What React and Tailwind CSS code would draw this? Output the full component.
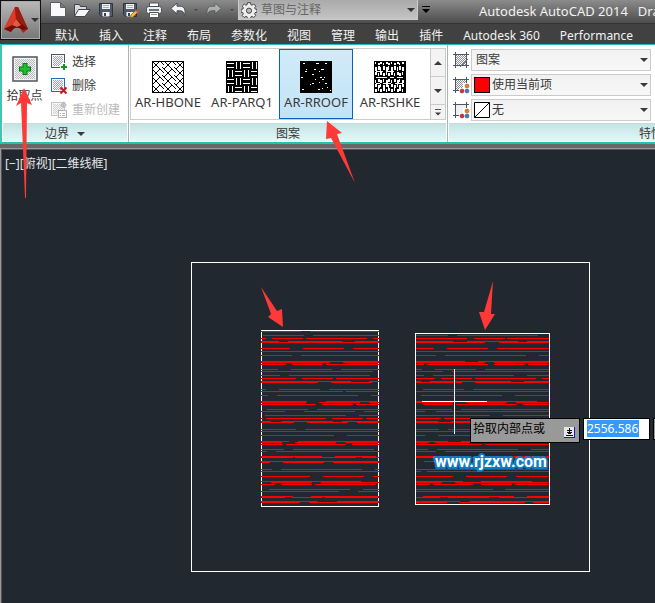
import React from "react";

const UI_FONT = "font-['Noto_Sans','Noto_Sans_CJK_SC',sans-serif]";

/* Each row: y, then start/end pairs, relative to the boundary's corner. */
const LEFT_HATCH = [
  [1, 0, 40, 49, 118], [5, 2, 43, 52, 118], [8, 0, 5, 11, 42, 45, 106, 112, 118],
  [11, 0, 18, 27, 81, 94, 118], [12, 0, 118], [18, 0, 29, 42, 83, 92, 118],
  [21, 0, 118], [25, 0, 31, 40, 118], [31, 0, 118], [32, 0, 69, 82, 118],
  [34, 0, 25, 31, 62, 65, 118], [39, 0, 17, 30, 71, 80, 118], [41, 0, 112],
  [45, 0, 19, 28, 109], [48, 0, 35, 41, 72, 75, 118], [51, 0, 90, 108, 118],
  [52, 0, 57, 70, 111], [59, 0, 5, 18, 59, 68, 118], [61, 0, 82, 85, 118],
  [65, 0, 7, 16, 97, 110, 118], [71, 0, 46, 65, 116], [72, 0, 45, 58, 99, 108, 118],
  [74, 0, 55, 61, 92, 95, 118], [79, 6, 47, 56, 118], [81, 0, 24, 43, 94, 103, 118],
  [85, 4, 85, 98, 118], [88, 0, 2, 5, 65, 71, 102, 105, 118], [91, 0, 10, 21, 72, 81, 118],
  [92, 0, 33, 46, 87, 96, 118], [99, 0, 35, 44, 118], [101, 0, 118],
  [105, 0, 73, 86, 118], [111, 0, 28, 37, 118], [112, 0, 21, 34, 75, 84, 118],
  [114, 0, 22, 25, 85, 91, 118], [119, 0, 23, 32, 113], [121, 0, 6, 15, 118],
  [126, 0, 61, 74, 115], [127, 0, 32, 34, 95, 101, 118], [131, 0, 118],
  [132, 0, 9, 22, 63, 72, 118], [139, 0, 11, 20, 101, 114, 118], [141, 0, 118],
  [146, 0, 49, 62, 103, 112, 118], [151, 0, 100], [152, 10, 51, 60, 118],
  [154, 0, 14, 20, 51, 54, 115], [159, 8, 89, 102, 118], [161, 0, 78, 97, 118],
  [166, 0, 32, 50, 118], [167, 0, 24, 31, 61, 64, 118], [171, 0, 56, 76, 118],
  [172, 0, 39, 48, 118],
];

const RIGHT_HATCH = [
  [2, 0, 33, 42, 123], [5, 0, 52, 59, 90, 92, 135], [8, 0, 38, 52, 103, 112, 135],
  [9, 0, 70, 84, 135], [15, 0, 19, 32, 73, 82, 135], [18, 0, 135],
  [22, 0, 21, 30, 111, 124, 135], [28, 0, 50, 63, 135], [29, 0, 70, 79, 135],
  [31, 0, 9, 12, 73, 79, 110, 113, 135], [36, 0, 7, 20, 61, 70, 135], [38, 0, 28, 37, 135],
  [42, 0, 9, 18, 99, 112, 135], [45, 0, 20, 26, 57, 60, 121, 127, 135],
  [48, 0, 6, 15, 96, 109, 135], [49, 0, 47, 60, 135], [56, 8, 49, 58, 135],
  [58, 0, 135], [62, 6, 87, 100, 135], [68, 0, 122], [69, 0, 38, 51, 92, 101, 135],
  [71, 8, 38, 41, 102, 108, 135], [76, 0, 37, 46, 135], [78, 0, 10, 21, 135],
  [82, 0, 75, 88, 135], [85, 0, 26, 29, 55], [88, 0, 23, 36, 55],
  [89, 0, 55], [96, 0, 24, 33, 135], [98, 0, 135], [102, 0, 10, 23, 135],
  [108, 0, 33, 46, 135], [109, 0, 14, 20, 82, 88, 135], [111, 0, 67, 70, 135],
  [116, 0, 13, 22, 103, 116, 135], [118, 0, 21, 30, 135], [123, 0, 50, 63, 135],
  [124, 0, 135], [128, 9, 50, 63, 135], [136, 0, 135], [138, 0, 6, 12, 135],
  [143, 0, 38, 51, 92, 101, 135], [148, 0, 48, 66, 117], [149, 0, 27, 40, 135],
  [151, 0, 15, 18, 58, 66, 97, 100, 135], [156, 0, 78, 90, 135], [158, 0, 135],
  [163, 8, 99, 112, 135], [164, 0, 25, 33, 74, 84, 135], [168, 0, 45, 54, 135],
  [169, 0, 32, 44, 110, 118, 135],
];

function Hatch({ x, y, rows }) {
  return (
    <g transform={`translate(${x} ${y})`} fill="#ff0000">
      {rows.map(([ry, ...xs], i) => {
        const parts = [];
        for (let k = 0; k < xs.length; k += 2) {
          parts.push(<rect key={k} x={xs[k]} y={ry} width={xs[k + 1] - xs[k]} height="1" />);
        }
        return <g key={i}>{parts}</g>;
      })}
    </g>
  );
}

function Caret({ size = "w-2", className = "" }) {
  return (
    <svg viewBox="0 0 8 4" className={`h-1 shrink-0 ${size} ${className}`} fill="currentColor" aria-hidden="true">
      <path d="M0 0h8L4 4z" />
    </svg>
  );
}

function Icon({ children, size = "size-4" }) {
  return (
    <svg viewBox="0 0 16 16" className={`${size} shrink-0 overflow-visible`} fill="none" aria-hidden="true">
      {children}
    </svg>
  );
}

const Disk = () => (
  <>
    <path d="M1.5 1.500h13v13h-11l-2-2z" fill="#50596a" stroke="#2c3442" />
    <path d="M4 2h8v5H4z" fill="#f2f2f2" />
    <path d="M5 3.500h6M5 5.500h6" stroke="#a8adb5" />
    <path d="M4.500 10h7v4.500h-7z" fill="#f4f4f4" />
    <path d="M6 11h2v3H6z" fill="#3b4352" />
  </>
);

const QUICK = [
  ["新建", <path key="a" d="M.5 1.500h10l5 5v9H.5zM10.500 1.500v5h5" transform="translate(0 -1)" fill="#fafafa" stroke="#596068" />],
  ["打开", <g key="a"><path d="M.5 14V2.500h5l1 2h6v3" fill="#d7d9dc" stroke="#3f464e" /><path d="M.5 14.500l4-7h11.500l-5 7z" fill="#f7f7f7" stroke="#3f464e" /></g>],
  ["保存", <Disk key="a" />],
  ["另存为", <g key="a"><Disk /><path d="M8 16l1-3 5-5 2 2-5 5z" fill="#f3b93c" stroke="#80551c" strokeWidth=".7" /><path d="M13 9l1.500-1.500L17 9.500 15.500 11z" fill="#d8574d" /></g>],
  ["打印", <g key="a"><path d="M3.500 5V1h9v4" fill="#fff" stroke="#555" /><rect x=".5" y="4.500" width="15" height="7" rx="2" fill="#eceef0" stroke="#4b5056" /><path d="M3 8h10" stroke="#454b54" strokeWidth="1.500" /><path d="M3.500 10.500h9v5h-9z" fill="#fff" stroke="#555" /><path d="M5 12.500h6" stroke="#999" /></g>],
  ["放弃", <path key="a" d="M.8 6.500L7 1v3.200h3c4.500 0 6 4 4.500 9.300C13.800 10 12.500 8.800 10 8.800H7V12z" fill="#f3f4f6" stroke="#474d55" />],
];

function HatchSwatch({ id, stroke = "#6b7178" }) {
  return (
    <defs>
      <pattern id={id} width="2" height="2" patternUnits="userSpaceOnUse">
        <path d="M0 0l2 2" stroke={stroke} strokeWidth=".8" />
      </pattern>
    </defs>
  );
}

function BoundaryIcon({ kind }) {
  const off = kind === "recreate";
  const id = `fill-${kind}`;
  return (
    <Icon>
      <HatchSwatch id={id} stroke={off ? "#c6c6c6" : "#8b9197"} />
      <rect x=".5" y=".5" width="13" height="13" fill="#f6f7f8" stroke={off ? "#c4c4c4" : kind === "remove" ? "#2868b8" : "#4e545c"} />
      <rect x="2" y="2" width="10" height="10" fill={`url(#${id})`} />
      {kind === "select" && <path d="M12.500 9v7M9 12.500h7" stroke="#fff" strokeWidth="4" />}
      {kind === "select" && <path d="M13 10v6M10 13h6" stroke="#0a9a1c" strokeWidth="2" />}
      {kind === "remove" && <path d="M9.500 9.500l6 6m0-6l-6 6" stroke="#cc1818" strokeWidth="2" />}
      {off && <g stroke="#b4b4b4"><rect x="7.500" y="8.500" width="8" height="7" fill="#fff" /><path d="M9 11.500h1m1 0h3M9 13.500h1m1 0h3" /><circle cx="12.500" cy="3" r="2" fill="#fff" /><path d="M12.500-.5v7M9 3h7M10 .5l5 5m0-5l-5 5" strokeWidth=".7" /></g>}
    </Icon>
  );
}

function PropIcon({ kind }) {
  const id = `prop-${kind}`;
  return (
    <Icon>
      <HatchSwatch id={id} />
      <rect x="3" y="3" width="10" height="10" fill={kind === "back" ? "#eef0f2" : "#fff"} />
      {kind !== "back" && <rect x="3" y="3" width="10" height="10" fill={`url(#${id})`} />}
      <path d="M0 2.500h16M2.500 0v16M0 13.500h16M13.500 0v16" stroke="#4b5563" />
      {kind === "type" && <path d="M7 15l8-8" stroke="#6b7280" />}
      {kind !== "type" && (
        <g>
          <path d="M6 11h4V6h7v11H6z" fill="#fff" />
          <circle cx="14" cy="9" r="2" fill="#ee7c1b" stroke="#9a4a10" strokeWidth=".5" />
          <circle cx="9" cy="14" r="2" fill="#d43131" stroke="#7d1717" strokeWidth=".5" />
          <circle cx="14" cy="14" r="2" fill="#3d7dc8" stroke="#1a4884" strokeWidth=".5" />
        </g>
      )}
    </Icon>
  );
}

function Tile({ children, bg = "#fff" }) {
  return (
    <svg viewBox="0 0 32 32" className="size-8" shapeRendering="crispEdges" aria-hidden="true">
      <rect width="32" height="32" fill={bg} />
      {children}
      <rect x=".5" y=".5" width="31" height="31" fill="none" stroke="#000" />
    </svg>
  );
}

function Hbone() {
  return (
    <Tile>
      <defs>
        <pattern id="hbone" width="12" height="8" patternUnits="userSpaceOnUse">
          <path d="M-2 10L10-2M0 0l6 6M6-2l8 8M6 6l4 4M-2-2l2 2M12 8l-2-2M10 10l4-4" stroke="#000" fill="none" />
        </pattern>
      </defs>
      <rect width="32" height="32" fill="url(#hbone)" />
    </Tile>
  );
}

function Parq() {
  const cells = [];
  for (let r = 0; r < 4; r++) {
    for (let c = 0; c < 4; c++) {
      const x = c * 8, y = r * 8;
      cells.push(
        <path
          key={`${r}-${c}`}
          d={(r + c) % 2 ? `M${x + 2.5} ${y + 1}v7M${x + 6.5} ${y + 1}v7` : `M${x + 1} ${y + 2.5}h7M${x + 1} ${y + 6.5}h7`}
          stroke="#fff"
        />
      );
    }
  }
  return <Tile bg="#000">{cells}</Tile>;
}

const ROOF_FLECKS = [[3, 2], [16, 2, 3], [25, 2], [6, 8, 1], [5, 10], [14, 8], [21, 8, 3], [12, 13], [19, 10, 1], [1, 16], [20, 16], [15, 18, 1], [22, 18], [24, 16, 1], [12, 22], [10, 23, 1], [19, 21, 1], [25, 22], [2, 28], [18, 28], [22, 27, 1], [27, 26, 1], [30, 29, 1]];

function Roof() {
  return (
    <Tile bg="#000">
      {ROOF_FLECKS.map(([x, y, w = 2]) => <rect key={`${x}-${y}`} x={x} y={y} width={w} height="1" fill="#fff" />)}
    </Tile>
  );
}

function Shake() {
  const rows = [[1, 2], [5, 4], [11, 3], [18, 3], [23, 3], [27, 3]];
  return (
    <Tile bg="#000">
      {rows.map(([y, h], r) =>
        [1, 4, 6, 9, 12, 14, 17, 20, 23, 25, 28].map((x, c) => (
          <rect key={`${y}-${x}`} x={x} y={y + ((r + c) % 2)} width={(c + r) % 3 ? 2 : 1} height={h} fill="#fff" />
        ))
      )}
      <path d="M2 10.500h7M12 10.500h8M2 16.500h11M16 16.500h4M23 16.500h6M2 22.500h4M9 22.500h8M21 22.500h8" stroke="#fff" />
    </Tile>
  );
}

const PATTERNS = [
  ["AR-HBONE", <Hbone key="p" />],
  ["AR-PARQ1", <Parq key="p" />],
  ["AR-RROOF", <Roof key="p" />],
  ["AR-RSHKE", <Shake key="p" />],
];

const TABS = ["默认", "插入", "注释", "布局", "参数化", "视图", "管理", "输出", "插件", "Autodesk 360", "Performance"];

function PanelTitle({ children }) {
  return (
    <div className="mx-px mb-px flex h-[18px] shrink-0 items-center justify-center gap-2 border-t border-[#c4dcdc] bg-linear-to-b from-[#c6e4e4] to-[#e0f9f9] pt-0.5 text-xs">
      {children}
    </div>
  );
}

function PropSelect({ label, kind, value, swatch }) {
  return (
    <label className="flex h-[22px] items-center gap-0.5">
      <PropIcon kind={kind} />
      <span className="flex h-full flex-1 items-center border border-[#cbcbcb] bg-linear-to-b from-[#f1f1f1] to-[#f8f8f8] px-0.5">
        {swatch}
        <select aria-label={label} className="min-w-0 flex-1 appearance-none bg-transparent pl-0.5 text-xs outline-none">
          <option>{value}</option>
        </select>
        <Caret />
      </span>
    </label>
  );
}

function TitleBar() {
  return (
    <div className="flex h-6 items-center overflow-hidden border-b border-[#333] bg-linear-to-b from-[#8c8c8c] to-[#4d4d4d] pb-1 pl-[9px]">
      <div className="flex shrink-0 items-center gap-2">
        {QUICK.map(([name, art]) => (
          <button key={name} aria-label={name}><Icon>{art}</Icon></button>
        ))}
        <Caret size="w-1" className="text-[#444]" />
        <button aria-label="重做" className="-scale-x-100 opacity-45"><Icon>{QUICK[5][1]}</Icon></button>
        <Caret size="w-1" className="text-[#444]" />
      </div>
      <label className="ml-1 flex h-[21px] w-[180px] shrink-0 items-center gap-1 border border-[#ccc] bg-linear-to-b from-[#aaa] to-[#c4c4c4] px-0.5 text-[#666]">
        <svg viewBox="0 0 16 16" className="size-4 shrink-0" fill="#eee" stroke="#444" aria-hidden="true">
          <path d="M6.500.7h3l.4 2 1.200.5 1.700-1.200 2.100 2.200-1.200 1.600.5 1.200 1.800.4v2.800l-1.900.4-.5 1.200 1.200 1.700-2.100 2-1.600-1.100-1.200.5-.4 1.900h-3l-.4-1.900-1.200-.5-1.700 1.100-2-2 1.100-1.700-.5-1.200-1.800-.4V7.400l1.900-.4.5-1.200-1.200-1.700 2.100-2.100 1.600 1.200 1.200-.5z" />
          <circle cx="8" cy="8.700" r="2.600" fill="#bbb" />
        </svg>
        <select aria-label="工作空间" className="min-w-0 flex-1 appearance-none bg-transparent text-xs outline-none">
          <option>草图与注释</option>
        </select>
        <Caret className="text-[#333]" />
      </label>
      <button aria-label="自定义" className="ml-1 flex shrink-0 flex-col items-center gap-0.5 text-black">
        <span className="h-px w-2 bg-black" />
        <Caret />
      </button>
      <h1 className="ml-[49px] flex shrink-0 gap-2.5 pt-1 text-[13px] whitespace-nowrap text-[#f2f2f2]">
        <span>Autodesk AutoCAD 2014</span>
        <span>Drawing1.dwg</span>
      </h1>
    </div>
  );
}

function Header() {
  return (
    <header className="flex h-11 shrink-0 bg-[#414141]">
      <button aria-label="应用程序菜单" className="flex h-10 w-[41px] shrink-0 items-center gap-0.5 border border-[#111] bg-linear-to-b from-[#b9b9b9] to-[#777] pl-[3px] text-[#333] outline-1 -outline-offset-2 outline-[#aaa]">
        <svg viewBox="0 0 25 27" className="h-[27px] w-[25px]" aria-hidden="true">
          <path d="M11 0h3l10 22-5 4-4-6-5 1-3 4-7-3z" fill="#b32417" />
          <path d="M11 0L0 22l7 3 3-8 2-5z" fill="#db3b28" />
          <path d="M11 0l1 12 7 8 5 2L14 0z" fill="#9c1b12" />
          <path d="M12 12l-4 6-8 4 7 3c2-4 6-6 12-2l5-1-6-5z" fill="#6d0f0b" />
          <path d="M8 18l4-6 5 6-4 2z" fill="#e25a43" />
        </svg>
        <Caret />
      </button>
      <div className="min-w-0 flex-1">
        <TitleBar />
        <nav className="flex h-5 items-center gap-5 overflow-hidden pt-1 pl-3.5 text-xs whitespace-nowrap text-[#f2f2f2]">
          {TABS.map((t) => <button key={t} className="shrink-0">{t}</button>)}
        </nav>
      </div>
    </header>
  );
}

function Ribbon() {
  return (
    <section className="flex h-[100px] shrink-0 overflow-hidden border-t border-b-2 border-l-2 border-y-[#22c2b2] border-l-[#3fc4b8] bg-white text-[#3a3a3a]">
      <div className="flex w-[126px] shrink-0 flex-col">
        <div className="flex flex-1 gap-2">
          <button className="flex w-[41px] shrink-0 flex-col items-center gap-1.5 pt-[11px] pl-1 text-xs whitespace-nowrap">
            <svg viewBox="0 0 26 26" className="size-[26px]" aria-hidden="true">
              <HatchSwatch id="pick" stroke="#a7acb2" />
              <rect x="1" y="1" width="24" height="24" fill="#f2f2f2" stroke="#4e545c" strokeWidth="1.500" />
              <rect x="3" y="3" width="20" height="20" fill="url(#pick)" />
              <path d="M13 7v12M7 13h12" stroke="#087818" strokeWidth="5" />
              <path d="M13 8v10M8 13h10" stroke="#1fc02c" strokeWidth="3" />
            </svg>
            拾取点
          </button>
          <div className="flex flex-col pt-[5px] text-xs whitespace-nowrap">
            {[["select", "选择"], ["remove", "删除"], ["recreate", "重新创建"]].map(([k, t]) => (
              <button key={k} disabled={k === "recreate"} className="flex h-6 items-center gap-[5px] disabled:text-[#bababa]">
                <BoundaryIcon kind={k} />{t}
              </button>
            ))}
          </div>
        </div>
        <PanelTitle>边界<Caret /></PanelTitle>
      </div>
      <div className="flex w-80 shrink-0 flex-col border-x border-[#a9b5b5]">
        <div className="flex flex-1 px-px pt-[3px] pb-[3px]">
          <div className="flex flex-1 border border-[#cbcbcb]">
            <div className="flex flex-1">
              {PATTERNS.map(([name, art]) => (
                <button key={name} aria-pressed={name === "AR-RROOF"} className="flex w-[74px] shrink-0 flex-col items-center gap-px border border-transparent pt-[11px] text-[13px] leading-4 aria-pressed:border-[#0a62ba] aria-pressed:bg-linear-to-b aria-pressed:from-[#d2eaf8] aria-pressed:to-[#c2e4f7]">
                  {art}{name}
                </button>
              ))}
            </div>
            <div className="flex w-[15px] shrink-0 flex-col divide-y divide-[#cbcbcb] border-l border-[#cbcbcb] bg-[#f3f3f3]">
              <button aria-label="上一行" className="flex flex-1 items-center justify-center"><Caret className="rotate-180" /></button>
              <button aria-label="下一行" className="flex flex-1 items-center justify-center"><Caret /></button>
              <button aria-label="展开" className="flex h-3.5 flex-col items-center justify-center gap-0.5">
                <span className="h-px w-1.5 bg-[#555]" /><Caret size="w-1.5" />
              </button>
            </div>
          </div>
        </div>
        <PanelTitle>图案</PanelTitle>
      </div>
      <div className="flex w-[406px] shrink-0 flex-col">
        <div className="flex w-[205px] flex-1 flex-col gap-[3px] pt-1 pr-0.5 pl-[5px]">
          <PropSelect label="图案类型" kind="type" value="图案" />
          <PropSelect label="图案填充颜色" kind="color" value="使用当前项" swatch={<span className="size-4 border border-black bg-[#f00]" />} />
          <PropSelect
            label="背景色"
            kind="back"
            value="无"
            swatch={<svg viewBox="0 0 16 16" className="size-4 shrink-0" aria-hidden="true"><path d="M.5.5h15v15H.5zM.5 15.500l15-15" fill="#fff" stroke="#000" /></svg>}
          />
        </div>
        <PanelTitle>特性</PanelTitle>
      </div>
    </section>
  );
}

function DynamicPrompt() {
  return (
    <div className="absolute top-[268px] left-[468px] flex items-start gap-[3px] whitespace-nowrap">
      <label htmlFor="coord" className="flex h-[25px] w-[110px] items-center justify-between border border-black bg-[#999] pr-1 pl-0.5 text-xs text-black">
        <span className="pb-1">拾取内部点或</span>
        <svg viewBox="0 0 11 11" className="mt-1 size-[11px]" shapeRendering="crispEdges" aria-hidden="true">
          <path d="M0 0h11v11H0z" fill="#1a1ab0" />
          <path d="M0 0h10v10H0z" fill="#e6e6e6" />
          <path d="M5 1h1v2h2v1H6v2H5V4H3V3h2zM3 5h5v1H7v1H4V6H3zM2 8h7v1H2z" fill="#111" />
        </svg>
      </label>
      <span className="flex h-[22px] w-[67px] border border-black bg-white pt-px pl-[3px]">
        <input id="coord" defaultValue="2556.586" className="h-[17px] w-[52px] bg-[#3399ff] text-xs text-white outline-none" />
      </span>
      <span className="h-[22px] w-10 shrink-0 border border-black bg-[#999]" />
    </div>
  );
}

function ModelSpace() {
  return (
    <main className="relative flex-1 overflow-hidden border-t border-l border-[#555] bg-[#212830]">
      <svg viewBox="2 150 653 453" className="absolute top-0 left-0 h-[453px] w-[653px]" shapeRendering="crispEdges" aria-hidden="true">
        <g fill="none" stroke="#fff">
          <rect x="191.500" y="262.500" width="398" height="309" />
          <rect x="261.500" y="330.500" width="117" height="176" />
          <rect x="415.500" y="333.500" width="134" height="171" />
        </g>
        <Hatch x={261} y={330} rows={LEFT_HATCH} />
        <svg x="416" y="334" width="133" height="170" viewBox="1 1 133 170">
          <Hatch x={0} y={0} rows={RIGHT_HATCH} />
        </svg>
        <path d="M454.500 369v65M422 401.500h65" stroke="#fff" />
      </svg>
      <div className="flex pt-1.5 pl-[3px] text-xs whitespace-nowrap text-[#e6e6e6]">
        <button>[−]</button><button>[俯视]</button><button>[二维线框]</button>
      </div>
      <svg viewBox="0 0 120 24" className="absolute top-[300px] left-[430px] h-6 w-[120px] font-[Roboto,sans-serif] text-[16px] font-bold" aria-hidden="true">
        <text x="3" y="17" fill="#fff" stroke="#0d7cc4" strokeWidth="4" strokeLinejoin="round" paintOrder="stroke">www.rjzxw.com</text>
      </svg>
      <DynamicPrompt />
    </main>
  );
}

function Annotations() {
  return (
    <svg viewBox="0 0 655 603" className="pointer-events-none absolute top-0 left-0 h-[603px] w-[655px]" fill="#ff3838" aria-hidden="true">
      <path d="M24 88l8 17-5-2-1 95h-1l-4-95-5 3z" />
      <path d="M327 121l15 12-5 1 18 49-24-45-5 1z" />
      <path d="M261 287l16 24 5-2 1 18-15-10 3-3z" />
      <path d="M493 281l-2 33h4l-10 16-6-18h5z" />
    </svg>
  );
}

export default function App() {
  return (
    <div className={`relative flex min-h-screen flex-col overflow-hidden bg-[#696969] ${UI_FONT}`}>
      <Header />
      <Ribbon />
      <div className="h-[5px] shrink-0 border-b border-[#999] bg-[#686868]" />
      <div className="flex flex-1 border-l border-[#999]">
        <ModelSpace />
      </div>
      <Annotations />
    </div>
  );
}
